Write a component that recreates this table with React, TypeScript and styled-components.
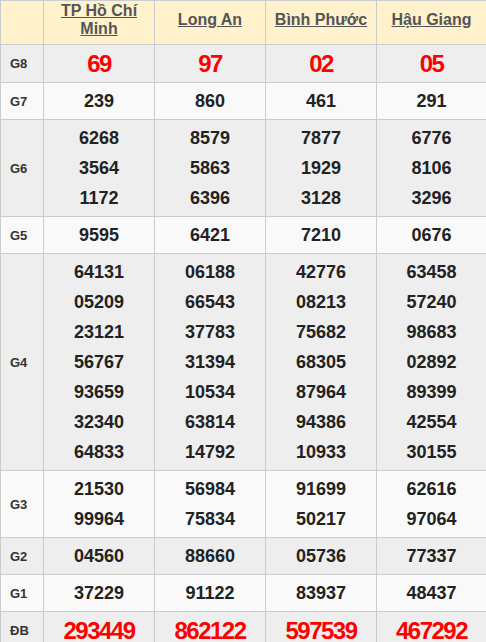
import styled, { createGlobalStyle } from 'styled-components';

const GlobalStyle = createGlobalStyle`
  body {
    margin: 0;
    background: #fff;
    font-family: "Liberation Sans", Arial, sans-serif;
  }
`;

const provinces = ['TP Hồ Chí Minh', 'Long An', 'Bình Phước', 'Hậu Giang'];
const colWidths = [43, 111, 111, 111, 110];

type Prize = { label: string; values: string[][]; big?: boolean };

const prizes: Prize[] = [
  { label: 'G8', values: [['69'], ['97'], ['02'], ['05']], big: true },
  { label: 'G7', values: [['239'], ['860'], ['461'], ['291']] },
  {
    label: 'G6',
    values: [
      ['6268', '3564', '1172'],
      ['8579', '5863', '6396'],
      ['7877', '1929', '3128'],
      ['6776', '8106', '3296'],
    ],
  },
  { label: 'G5', values: [['9595'], ['6421'], ['7210'], ['0676']] },
  {
    label: 'G4',
    values: [
      ['64131', '05209', '23121', '56767', '93659', '32340', '64833'],
      ['06188', '66543', '37783', '31394', '10534', '63814', '14792'],
      ['42776', '08213', '75682', '68305', '87964', '94386', '10933'],
      ['63458', '57240', '98683', '02892', '89399', '42554', '30155'],
    ],
  },
  {
    label: 'G3',
    values: [
      ['21530', '99964'],
      ['56984', '75834'],
      ['91699', '50217'],
      ['62616', '97064'],
    ],
  },
  { label: 'G2', values: [['04560'], ['88660'], ['05736'], ['77337']] },
  { label: 'G1', values: [['37229'], ['91122'], ['83937'], ['48437']] },
  { label: 'ĐB', values: [['293449'], ['862122'], ['597539'], ['467292']], big: true },
];

const Table = styled.table`
  width: 486px;
  border-collapse: collapse;
  table-layout: fixed;
`;

const Col = styled.col<{ $w: number }>`
  width: ${(p) => p.$w}px;
`;

const HeadRow = styled.tr`
  background: #fff2cc;
`;

const Row = styled.tr<{ $odd: boolean }>`
  background: ${(p) => (p.$odd ? '#eeeeee' : '#f9f9f9')};
`;

const HeadCell = styled.th`
  border: 1px solid #cccccc;
  padding: 1px 4px 6px;
  vertical-align: middle;
  text-align: center;
`;

const ProvinceLink = styled.a`
  font-size: 16px;
  line-height: 18px;
  font-weight: bold;
  color: #555555;
  text-decoration: underline;
`;

const LabelCell = styled.td`
  border: 1px solid #cccccc;
  padding: 0 0 0 9px;
  font-size: 13px;
  font-weight: bold;
  color: #333333;
  text-align: left;
`;

const NumCell = styled.td`
  border: 1px solid #cccccc;
  padding: 3px 0;
  text-align: center;
  vertical-align: middle;
`;

const Num = styled.div<{ $big?: boolean }>`
  font-size: ${(p) => (p.$big ? '24px' : '18px')};
  line-height: ${(p) => (p.$big ? '31px' : '30px')};
  letter-spacing: ${(p) => (p.$big ? '-1.5px' : '0')};
  font-weight: bold;
  color: ${(p) => (p.$big ? '#ff0000' : '#222222')};
`;

export default function App() {
  return (
    <>
      <GlobalStyle />
      <Table>
        <colgroup>
          {colWidths.map((w, i) => (
            <Col key={i} $w={w} />
          ))}
        </colgroup>
        <thead>
          <HeadRow>
            <HeadCell />
            {provinces.map((p) => (
              <HeadCell key={p}>
                <ProvinceLink href="#">{p}</ProvinceLink>
              </HeadCell>
            ))}
          </HeadRow>
        </thead>
        <tbody>
          {prizes.map((prize, i) => (
            <Row key={prize.label} $odd={i % 2 === 0}>
              <LabelCell>{prize.label}</LabelCell>
              {prize.values.map((col, j) => (
                <NumCell key={j}>
                  {col.map((v, k) => (
                    <Num key={k} $big={prize.big}>
                      {v}
                    </Num>
                  ))}
                </NumCell>
              ))}
            </Row>
          ))}
        </tbody>
      </Table>
    </>
  );
}
